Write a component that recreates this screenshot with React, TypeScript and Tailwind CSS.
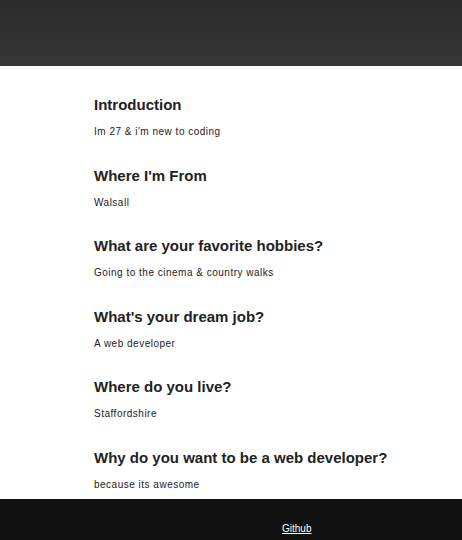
const sections = [
  { title: "Introduction", text: "Im 27 & i'm new to coding" },
  { title: "Where I'm From", text: "Walsall" },
  { title: "What are your favorite hobbies?", text: "Going to the cinema & country walks" },
  { title: "What's your dream job?", text: "A web developer" },
  { title: "Where do you live?", text: "Staffordshire" },
  { title: "Why do you want to be a web developer?", text: "because its awesome" },
];

const App = () => {
  return (
    <div className="min-h-screen bg-white font-['Liberation_Sans',Arial,sans-serif] text-[#222]">
      <header className="h-[66px] bg-gradient-to-b from-[#2c2c2c] to-[#363636]" />
      <main className="flex flex-col gap-[27.5px] pl-[94px] pt-[29px] pb-[8.5px]">
        {sections.map((s) => (
          <section key={s.title}>
            <h2 className="text-[15px] font-bold leading-[20px]">{s.title}</h2>
            <p className="mt-[11px] text-[10px] leading-[12px] tracking-[0.5px]">{s.text}</p>
          </section>
        ))}
      </main>
      <footer className="h-[42px] overflow-hidden bg-[#111] pl-[282px] pt-[24px]">
        <a href="#" className="block w-fit text-[10px] leading-[12px] text-white underline">
          Github
        </a>
      </footer>
    </div>
  );
};

export default App;
